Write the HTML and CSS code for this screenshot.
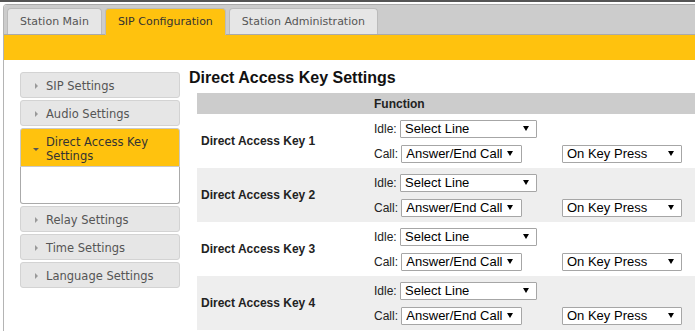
FILE: index.html
```html
<!DOCTYPE html>
<html>
<head>
<link rel="stylesheet" href="styles.css">
</head>
<body>
<div class="top-line"></div>
<div class="frame">
    <div class="tabbar">
        <div class="tab">Station Main</div>
        <div class="tab active">SIP Configuration</div>
        <div class="tab">Station Administration</div>
    </div>
    <div class="band"></div>
    <div class="content">
        <div class="accordion">
            <div class="acc-head"><span class="arrow"></span>SIP Settings</div>
            <div class="acc-head"><span class="arrow"></span>Audio Settings</div>
            <div class="acc-head open"><span class="arrow"></span>Direct Access Key Settings</div>
            <div class="acc-body"></div>
            <div class="acc-head"><span class="arrow"></span>Relay Settings</div>
            <div class="acc-head"><span class="arrow"></span>Time Settings</div>
            <div class="acc-head"><span class="arrow"></span>Language Settings</div>
        </div>
        <div class="main">
            <h2>Direct Access Key Settings</h2>
            <table class="keys">
                <tr class="head">
                    <th class="c1"></th>
                    <th class="c2">Function</th>
                    <th class="c3"></th>
                </tr>
                <tr>
                    <td class="c1">Direct Access Key 1</td>
                    <td class="c2">
                        <div class="line">Idle: <span class="sel idle"><select><option>Select Line</option></select></span></div>
                        <div class="line">Call: <span class="sel call"><select><option>Answer/End Call</option></select></span></div>
                    </td>
                    <td class="c3"><span class="sel press"><select><option>On Key Press</option></select></span></td>
                </tr>
                <tr class="alt">
                    <td class="c1">Direct Access Key 2</td>
                    <td class="c2">
                        <div class="line">Idle: <span class="sel idle"><select><option>Select Line</option></select></span></div>
                        <div class="line">Call: <span class="sel call"><select><option>Answer/End Call</option></select></span></div>
                    </td>
                    <td class="c3"><span class="sel press"><select><option>On Key Press</option></select></span></td>
                </tr>
                <tr>
                    <td class="c1">Direct Access Key 3</td>
                    <td class="c2">
                        <div class="line">Idle: <span class="sel idle"><select><option>Select Line</option></select></span></div>
                        <div class="line">Call: <span class="sel call"><select><option>Answer/End Call</option></select></span></div>
                    </td>
                    <td class="c3"><span class="sel press"><select><option>On Key Press</option></select></span></td>
                </tr>
                <tr class="alt">
                    <td class="c1">Direct Access Key 4</td>
                    <td class="c2">
                        <div class="line">Idle: <span class="sel idle"><select><option>Select Line</option></select></span></div>
                        <div class="line">Call: <span class="sel call"><select><option>Answer/End Call</option></select></span></div>
                    </td>
                    <td class="c3"><span class="sel press"><select><option>On Key Press</option></select></span></td>
                </tr>
            </table>
        </div>
    </div>
</div>
</body>
</html>
```

FILE: styles.css
```css
body {
    margin: 0;
    overflow: hidden;
    color: #222;
    font: 12px "Liberation Sans", Arial, sans-serif;
}

.top-line {
    height: 2px;
    background: #555;
    margin-bottom: 2px;
}

.frame {
    margin-left: 3px;
    border-left: 1px solid #b4b4b4;
    border-top: 1px solid #aaa;
    border-top-left-radius: 4px;
    min-height: calc(100vh - 5px);
}

.tabbar {
    display: flex;
    gap: 3px;
    padding: 3px 0 0 3px;
    background: #ccc;
    border-bottom: 1px solid #aaa;
    border-top-left-radius: 3px;
}
.tab {
    height: 25px;
    padding: 0 12px;
    border: 1px solid #bbb;
    border-bottom: none;
    border-radius: 4px 4px 0 0;
    background: #e6e6e6;
    color: #555;
    font: 11px "DejaVu Sans", Verdana, sans-serif;
    line-height: 26px;
}
.tab.active {
    background: #ffc20e;
    color: #333;
    height: 26px;
    margin-bottom: -1px;
}

.band {
    height: 25px;
    background: #ffc20e;
}

.content {
    display: flex;
    align-items: flex-start;
}

/* left accordion */
.accordion {
    width: 160px;
    margin: 12px 0 0 16px;
    font: 11.5px "DejaVu Sans", Verdana, sans-serif;
}
.acc-head {
    position: relative;
    box-sizing: border-box;
    height: 26px;
    line-height: 24px;
    padding: 1px 0 0 25px;
    margin-bottom: 2px;
    border: 1px solid #d3d3d3;
    border-radius: 3px;
    background: #e6e6e6;
    color: #555;
}
.acc-head .arrow {
    position: absolute;
    left: 14px;
    top: 10px;
    border-top: 3px solid transparent;
    border-bottom: 3px solid transparent;
    border-left: 3px solid #999;
}
.acc-head.open {
    height: auto;
    line-height: 14px;
    padding: 6px 8px 3px 25px;
    margin-bottom: 0;
    border-color: #c9c9c9;
    border-radius: 3px 3px 0 0;
    background: #ffc20e;
    color: #333;
}
.acc-head.open .arrow {
    left: 12px;
    top: 19px;
    border-left: 3px solid transparent;
    border-right: 3px solid transparent;
    border-top: 3px solid #555;
    border-bottom: none;
}
.acc-body {
    height: 36px;
    margin-bottom: 2px;
    border: 1px solid #aaa;
    border-top: none;
    border-radius: 0 0 3px 3px;
    background: #fff;
}

/* right side */
.main {
    flex: 1;
    margin: 8px 0 0 9px;
}
.main h2 {
    margin: 0 0 5px 0;
    font-size: 16px;
    line-height: 20px;
    color: #111;
}

.keys {
    width: calc(100% - 8px);
    margin-left: 8px;
    border-collapse: collapse;
    font: 12px "Liberation Sans", Arial, sans-serif;
    color: #222;
}
.keys td, .keys th {
    padding: 0;
    text-align: left;
}
.keys .head th {
    height: 16px;
    line-height: 16px;
    background: #ccc;
    font-weight: bold;
}
.keys .c1 {
    width: 173px;
    padding-left: 4px;
    font-weight: bold;
    vertical-align: middle;
}
.keys .c2 {
    width: 188px;
    padding: 6px 0 5px;
}
.keys .head .c2 {
    padding: 0;
}
.keys .c3 {
    vertical-align: bottom;
    padding-bottom: 5px;
}
.keys tr.alt td {
    background: #eee;
}
.line {
    height: 18px;
    line-height: 18px;
}
.line + .line {
    margin-top: 7px;
}

.sel {
    position: relative;
    display: inline-block;
    vertical-align: top;
}
.sel select {
    display: block;
    -webkit-appearance: none;
    appearance: none;
    box-sizing: border-box;
    height: 18px;
    margin: 0;
    padding: 0 0 0 4px;
    border: 1px solid #a6a6a6;
    border-radius: 1px;
    background: #fff;
    color: #000;
    font: 13px "Liberation Sans", Arial, sans-serif;
    line-height: 16px;
    outline: none;
}
.sel::after {
    content: "";
    position: absolute;
    right: 8px;
    top: 6px;
    border-left: 3px solid transparent;
    border-right: 3px solid transparent;
    border-top: 5px solid #000;
    pointer-events: none;
}
.sel.idle select { width: 137px; }
.sel.call select { width: 121px; }
.sel.call::after { right: 9px; }
.sel.press select { width: 120px; }
```
